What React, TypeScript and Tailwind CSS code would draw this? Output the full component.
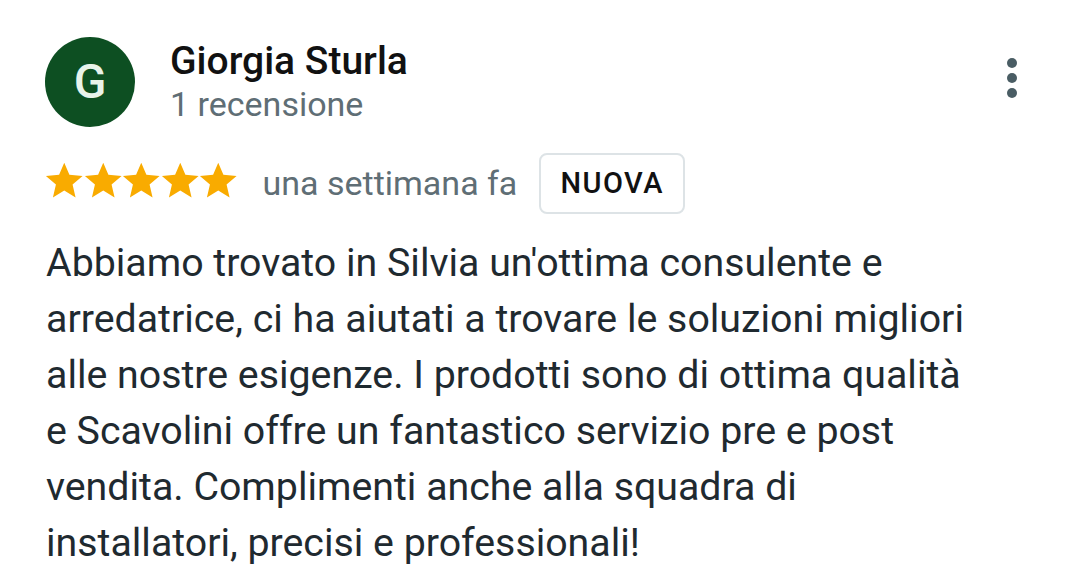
export default function App() {
  return (
    <div
      className="w-[1080px] h-[583px] bg-white overflow-hidden"
      style={{ fontFamily: "Roboto, 'Noto Sans', sans-serif" }}
    >
      <div className="flex items-start pl-[45px] pr-[63px] pt-[37px]">
        <div className="w-[90px] h-[90px] rounded-full bg-[#0d4f22] flex items-center justify-center text-[#e8f3ea] text-[48px] font-medium shrink-0">
          G
        </div>
        <div className="ml-[35px] flex flex-col flex-1">
          <div className="text-[39px] leading-[46px] font-medium text-[#111] mt-[1px]">
            Giorgia Sturla
          </div>
          <div className="text-[34px] leading-[40px] text-[#5f6e75]">
            1 recensione
          </div>
        </div>
        <div className="flex flex-col gap-[5px] mt-[21px]">
          <span className="w-[10px] h-[10px] rounded-full bg-[#4a5d64]" />
          <span className="w-[10px] h-[10px] rounded-full bg-[#4a5d64]" />
          <span className="w-[10px] h-[10px] rounded-full bg-[#4a5d64]" />
        </div>
      </div>

      <div className="flex items-center pl-[45px] mt-[26px]">
        <div className="flex mb-[6px]">
          {[0, 1, 2, 3, 4].map((i) => (
            <svg key={i} width="38.5" height="37" viewBox="1.5 2 21 19.5">
              <path
                fill="#f9ab00"
                d="M12 17.27 18.18 21l-1.64-7.03L22 9.24l-7.19-.61L12 2 9.19 8.63 2 9.24l5.46 4.73L5.82 21z"
              />
            </svg>
          ))}
        </div>
        <span className="ml-[25px] text-[34px] text-[#5f6e75]">una settimana fa</span>
        <span className="ml-[22px] h-[61px] px-[19px] flex items-center border-2 border-[#dde3e6] rounded-[8px] text-[29px] font-medium tracking-[1.5px] text-[#111]">
          NUOVA
        </span>
      </div>

      <p className="pl-[46px] pr-[40px] mt-[21px] text-[39.3px] leading-[56px] text-[#1f2a30]">
        Abbiamo trovato in Silvia un'ottima consulente e<br />
        arredatrice, ci ha aiutati a trovare le soluzioni migliori<br />
        alle nostre esigenze. I prodotti sono di ottima qualità<br />
        e Scavolini offre un fantastico servizio pre e post<br />
        vendita. Complimenti anche alla squadra di<br />
        installatori, precisi e professionali!
      </p>
    </div>
  );
}
